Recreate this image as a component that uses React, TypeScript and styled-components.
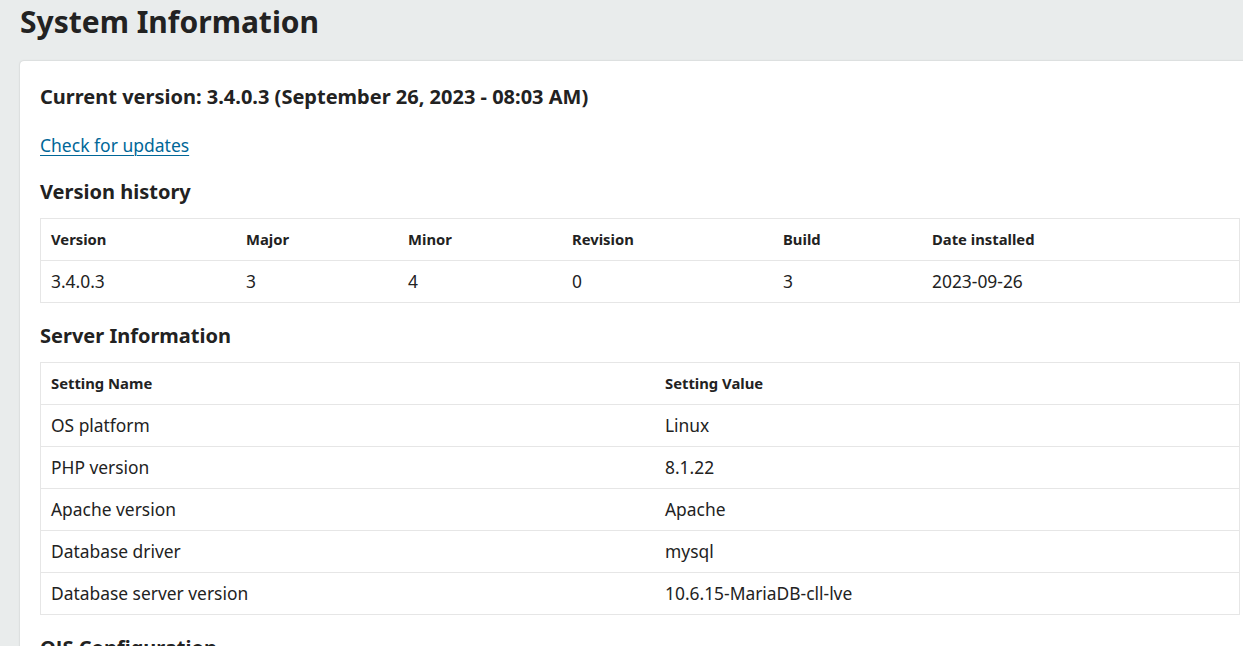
import React from "react";
import styled, { createGlobalStyle } from "styled-components";

const Global = createGlobalStyle`
  html, body { margin: 0; padding: 0; }
  body {
    background: #e9ecec;
    font-family: "Noto Sans", "Open Sans", sans-serif;
    color: #222;
    overflow: hidden;
    width: 1243px;
    height: 646px;
  }
`;

const Page = styled.div`
  padding: 0 0 0 20px;
  width: 1260px;
`;

const Title = styled.h1`
  margin: 0;
  height: 61px;
  font-size: 30px;
  font-weight: 700;
  line-height: 44px;
  color: #222;
`;

const Card = styled.div`
  background: #fff;
  width: 1200px;
  padding: 20px 20px;
  border-radius: 4px 0 0 0;
  box-shadow: 0 0 2px rgba(0, 0, 0, 0.2);
`;

const Current = styled.h2`
  margin: 0;
  font-size: 20px;
  font-weight: 700;
  line-height: 32px;
`;

const Link = styled.a`
  display: inline-block;
  margin-top: 18px;
  font-size: 17.5px;
  line-height: 28px;
  color: #006798;
  text-decoration: underline;
  text-underline-offset: 3px;
  text-decoration-thickness: 1px;
`;

const SectionTitle = styled.h3`
  margin: 19px 0 12px;
  font-size: 20px;
  font-weight: 700;
  line-height: 28px;
`;

const Table = styled.table`
  width: 1200px;
  border-collapse: collapse;
  border: 1px solid #e6e6e6;
  table-layout: fixed;
`;

const Th = styled.th<{ $w?: number }>`
  text-align: left;
  font-size: 14.8px;
  font-weight: 700;
  height: 39px;
  padding: 0 10px 2px;
  border-bottom: 1px solid #e6e6e6;
  width: ${(p) => (p.$w ? `${p.$w - 20}px` : "auto")};
`;

const Td = styled.td`
  font-size: 17.4px;
  font-weight: 400;
  height: 39px;
  padding: 0 10px 2px;
  border-bottom: 1px solid #e6e6e6;
  color: #222;
`;

const historyCols = [
  { label: "Version", w: 195 },
  { label: "Major", w: 162 },
  { label: "Minor", w: 164 },
  { label: "Revision", w: 211 },
  { label: "Build", w: 149 },
  { label: "Date installed", w: 0 },
];
const historyRow = ["3.4.0.3", "3", "4", "0", "3", "2023-09-26"];

const server = [
  ["OS platform", "Linux"],
  ["PHP version", "8.1.22"],
  ["Apache version", "Apache"],
  ["Database driver", "mysql"],
  ["Database server version", "10.6.15-MariaDB-cll-lve"],
];

export default function App() {
  return (
    <>
      <Global />
      <Page>
        <Title>System Information</Title>
        <Card>
          <Current>Current version: 3.4.0.3 (September 26, 2023 - 08:03 AM)</Current>
          <Link href="#">Check for updates</Link>
          <SectionTitle>Version history</SectionTitle>
          <Table>
            <thead>
              <tr>
                {historyCols.map((c) => (
                  <Th key={c.label} $w={c.w || undefined}>
                    {c.label}
                  </Th>
                ))}
              </tr>
            </thead>
            <tbody>
              <tr>
                {historyRow.map((v, i) => (
                  <Td key={i}>{v}</Td>
                ))}
              </tr>
            </tbody>
          </Table>
          <SectionTitle>Server Information</SectionTitle>
          <Table>
            <thead>
              <tr>
                <Th $w={614}>Setting Name</Th>
                <Th>Setting Value</Th>
              </tr>
            </thead>
            <tbody>
              {server.map(([k, v]) => (
                <tr key={k}>
                  <Td>{k}</Td>
                  <Td>{v}</Td>
                </tr>
              ))}
            </tbody>
          </Table>
          <SectionTitle>OJS Configuration</SectionTitle>
        </Card>
      </Page>
    </>
  );
}
